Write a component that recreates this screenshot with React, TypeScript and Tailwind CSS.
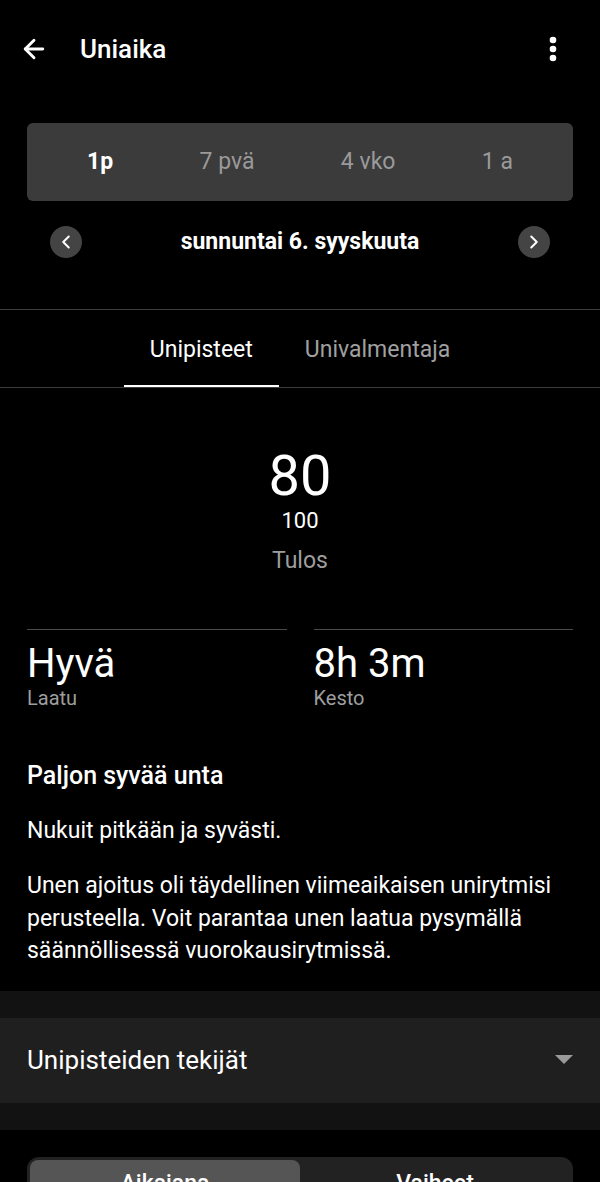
import { ArrowLeft, ChevronLeft, ChevronRight } from "lucide-react";

const ranges = ["1p", "7 pvä", "4 vko", "1 a"];

function Stat({ value, label }: { value: string; label: string }) {
    return (
        <div className="flex-1 border-t border-[#4a4a4a] pt-[11px]">
            <div className="text-[40px] leading-[46px] text-white">{value}</div>
            <div className="text-[20px] leading-[22px] text-[#9e9e9e]">{label}</div>
        </div>
    );
}

export default function App() {
    return (
        <div className="w-[600px] h-[1182px] overflow-hidden bg-black text-white font-['Roboto',sans-serif]">
            <header className="flex items-center h-[98px] pl-[19px] pr-[43px]">
                <ArrowLeft size={30} strokeWidth={2.3} className="text-white" />
                <h1 className="ml-[31px] text-[26px] font-medium">Uniaika</h1>
                <svg width="8" height="26" viewBox="0 0 8 26" className="ml-auto">
                    <circle cx="4" cy="4" r="3.3" fill="white" />
                    <circle cx="4" cy="13" r="3.3" fill="white" />
                    <circle cx="4" cy="22" r="3.3" fill="white" />
                </svg>
            </header>

            <div className="mx-[27px] mt-[25px] h-[78px] rounded-md bg-[#3b3b3b] flex items-center justify-between px-[60px]">
                {ranges.map((r, i) => (
                    <div
                        key={r}
                        className={
                            i === 0
                                ? "text-[23px] font-bold text-white"
                                : "text-[23px] text-[#9a9a9a]"
                        }
                    >
                        {r}
                    </div>
                ))}
            </div>

            <div className="flex items-center justify-between h-[48px] mt-[17px] px-[50px]">
                <button className="w-[32px] h-[32px] rounded-full bg-[#444] flex items-center justify-center">
                    <ChevronLeft size={22} strokeWidth={2.2} className="text-white" />
                </button>
                <span className="text-[23px] font-bold">sunnuntai 6. syyskuuta</span>
                <button className="w-[32px] h-[32px] rounded-full bg-[#444] flex items-center justify-center">
                    <ChevronRight size={22} strokeWidth={2.2} className="text-white" />
                </button>
            </div>

            <div className="mt-[43px] border-t border-[#3c3c3c] border-b flex justify-center h-[79px]">
                <div className="px-[26px] pt-[5px] flex items-center border-b-2 border-white text-[23px] text-white">
                    Unipisteet
                </div>
                <div className="px-[26px] pt-[3px] flex items-center text-[23px] text-[#a0a0a0]">
                    Univalmentaja
                </div>
            </div>

            <div className="flex flex-col items-center pt-[60px]">
                <div className="text-[56px] leading-[56px]">80</div>
                <div className="text-[22px] leading-[26px] mt-[4px]">100</div>
                <div className="text-[23px] leading-[26px] mt-[14px] text-[#9e9e9e]">Tulos</div>
            </div>

            <div className="flex gap-[27px] px-[27px] mt-[55px]">
                <Stat value="Hyvä" label="Laatu" />
                <Stat value="8h 3m" label="Kesto" />
            </div>

            <div className="px-[27px] mt-[52px]">
                <h2 className="text-[25px] font-medium leading-[30px]">Paljon syvää unta</h2>
                <p className="mt-[24px] text-[23px] leading-[32px]">Nukuit pitkään ja syvästi.</p>
                <p className="mt-[23px] text-[23px] leading-[32.5px]">
                    Unen ajoitus oli täydellinen viimeaikaisen unirytmisi perusteella. Voit parantaa unen laatua pysymällä
                    säännöllisessä vuorokausirytmissä.
                </p>
            </div>

            <div className="mt-[23px] bg-[#121212] py-[27px]">
                <div className="bg-[#1f1f1f] h-[85px] flex items-center justify-between px-[27px]">
                    <span className="text-[26px]">Unipisteiden tekijät</span>
                    <svg width="18" height="10" viewBox="0 0 18 10">
                        <polygon points="0,0 18,0 9,9" fill="#9a9a9a" />
                    </svg>
                </div>
            </div>

            <div className="mx-[27px] mt-[27px] h-[70px] rounded-xl bg-[#222] p-[3px] grid grid-cols-2">
                <div className="rounded-lg bg-[#555] flex justify-center pt-[7px] text-[23px] font-medium">Aikajana</div>
                <div className="flex justify-center pt-[7px] text-[23px] font-medium">Vaiheet</div>
            </div>
        </div>
    );
}
